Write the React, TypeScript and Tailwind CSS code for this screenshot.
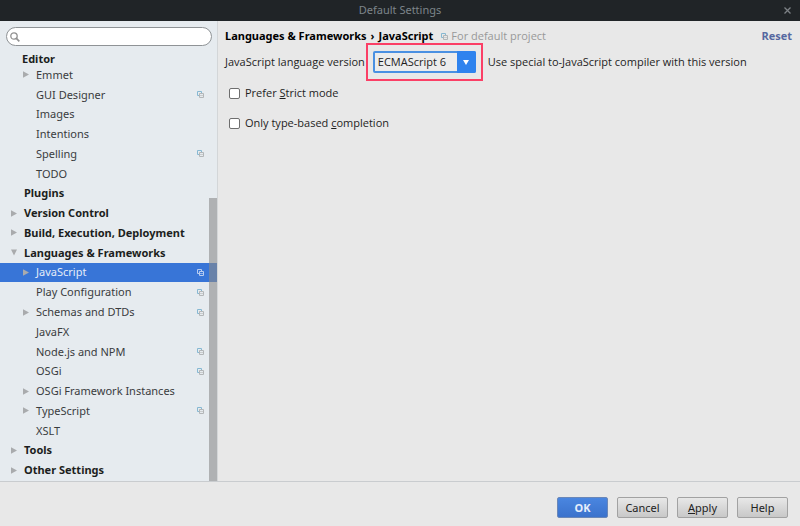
import type { ReactNode } from "react";

type TreeItem = {
  label: string;
  level: 1 | 2;
  arrow?: "open" | "closed";
  project?: boolean;
  selected?: boolean;
};

const items: TreeItem[] = [
  { label: "Emmet", level: 2, arrow: "closed" },
  { label: "GUI Designer", level: 2, project: true },
  { label: "Images", level: 2 },
  { label: "Intentions", level: 2 },
  { label: "Spelling", level: 2, project: true },
  { label: "TODO", level: 2 },
  { label: "Plugins", level: 1 },
  { label: "Version Control", level: 1, arrow: "closed" },
  { label: "Build, Execution, Deployment", level: 1, arrow: "closed" },
  { label: "Languages & Frameworks", level: 1, arrow: "open" },
  { label: "JavaScript", level: 2, arrow: "closed", project: true, selected: true },
  { label: "Play Configuration", level: 2, project: true },
  { label: "Schemas and DTDs", level: 2, arrow: "closed", project: true },
  { label: "JavaFX", level: 2 },
  { label: "Node.js and NPM", level: 2, project: true },
  { label: "OSGi", level: 2, project: true },
  { label: "OSGi Framework Instances", level: 2, arrow: "closed" },
  { label: "TypeScript", level: 2, arrow: "closed", project: true },
  { label: "XSLT", level: 2 },
  { label: "Tools", level: 1, arrow: "closed" },
  { label: "Other Settings", level: 1, arrow: "closed" },
];

function ProjectIcon({ selected }: { selected?: boolean }) {
  return (
    <svg width="7" height="7" viewBox="0 0 7 7" fill="none" className="shrink-0">
      <path d="M2 4.5H.5v-4h4V2" stroke={selected ? "#b9cdf0" : "#86b8d2"} />
      <path d="M2.5 2.5h4v4h-4z" stroke={selected ? "#b9cdf0" : "#b3b6b8"} />
      <path d="M3 4.5h3" stroke={selected ? "#8fb0ea" : "#c9cccd"} />
    </svg>
  );
}

function TreeArrow({ state }: { state?: "open" | "closed" }) {
  return (
    <svg width="6" height="7" viewBox="0 0 6 7" fill="#a9abad" className="shrink-0">
      {state === "closed" && <path d="M0 .2 6 3.5 0 6.8z" />}
      {state === "open" && <path d="M0 .5h6L3 6.5z" />}
    </svg>
  );
}

function TreeRow({ item }: { item: TreeItem }) {
  return (
    <li
      className={`flex items-center pr-[13px] ${item.level === 1 ? "pl-[11px] font-bold" : "pl-[23px]"} ${
        item.selected ? "bg-[#3875d7] text-[#e4ecf8]" : item.level === 1 ? "text-[#1c1e20]" : "text-[#3a3c3e]"
      }`}
    >
      <TreeArrow state={item.arrow} />
      <span className="ml-[7px] flex-1 whitespace-nowrap leading-4">{item.label}</span>
      {item.project && <ProjectIcon selected={item.selected} />}
    </li>
  );
}

function DialogButton({ children, primary }: { children: ReactNode; primary?: boolean }) {
  return (
    <button
      type="button"
      className={`h-[21px] w-[51px] rounded-[2px] border text-center leading-4 ${
        primary
          ? "border-[#6a87b8] bg-linear-to-b from-[#4a86e0] to-[#3b72cc] font-bold text-[#e6eefb]"
          : "border-[#a2a2a2] bg-linear-to-b from-[#e8e8e8] to-[#c8c8c8] text-[#222]"
      }`}
    >
      {children}
    </button>
  );
}

function CheckOption({ children }: { children: ReactNode }) {
  return (
    <label className="flex items-center gap-[5px]">
      <input
        type="checkbox"
        className="size-[11px] appearance-none rounded-[2px] border border-[#6e6e6e] bg-white checked:bg-[#3875d7]"
      />
      <span className="leading-4">{children}</span>
    </label>
  );
}

export default function App() {
  return (
    <div className="flex h-screen flex-col bg-[#e8e8e8] font-['Noto_Sans',sans-serif] text-[11px] text-[#1e1e1e]">
      <header className="relative flex h-[21px] shrink-0 items-center justify-center bg-[#202427] text-[#7d848a]">
        <h1>Default Settings</h1>
        <button type="button" aria-label="Close" className="absolute right-[9px]">
          <svg width="7" height="7" viewBox="0 0 7 7" stroke="#7d8286" strokeWidth="1.3">
            <path d="M.5.5l6 6M6.5.5l-6 6" />
          </svg>
        </button>
      </header>

      <div className="flex min-h-0 flex-1 border-b border-[#c9cccf]">
        <aside className="relative flex w-[218px] shrink-0 flex-col border-r border-[#d3d6d8] bg-[#e6ebef]">
          <div className="relative mx-[6px] mt-[6px] mr-[5px] flex items-center">
            <svg
              width="10"
              height="10"
              viewBox="0 0 10 10"
              fill="none"
              stroke="#929292"
              className="pointer-events-none absolute left-1"
            >
              <circle cx="4" cy="4" r="3.2" strokeWidth="1.3" />
              <path d="M6.4 6.4 9.3 9.3" strokeWidth="1.7" />
            </svg>
            <input
              type="search"
              aria-label="Search settings"
              className="h-[19px] w-full rounded-full border border-[#8f9396] bg-white pr-2 pl-5 outline-none"
            />
          </div>
          <h2 className="mt-[5px] pl-[22px] font-bold leading-4 text-[#1c1e20]">Editor</h2>
          <ul className="-mt-[2px] grid min-h-0 flex-1 auto-rows-fr pb-px">
            {items.map((item) => (
              <TreeRow key={item.label} item={item} />
            ))}
          </ul>
          <div className="absolute right-0 bottom-0 h-[283px] w-2 bg-[#8b8b8b]/60" />
        </aside>

        <main className="flex-1 pt-[7px] pr-2 pl-[7px] font-['Open_Sans',sans-serif]">
          <div className="flex items-center">
            <h2 className="flex gap-1 font-['Noto_Sans',sans-serif] font-bold leading-4 text-black">
              <span>Languages &amp; Frameworks</span>
              <span>›</span>
              <span>JavaScript</span>
            </h2>
            <span className="ml-2 flex items-center gap-[3px] leading-4 text-[#999]">
              <ProjectIcon />
              For default project
            </span>
            <a href="#reset" className="ml-auto font-bold leading-4 text-[#5668a0]">
              Reset
            </a>
          </div>

          <div className="mt-[7px] flex items-center">
            <label htmlFor="version" className="leading-4">
              JavaScript language version
            </label>
            <div className="relative ml-2 flex">
              <select
                id="version"
                defaultValue="6"
                className="h-[22px] w-[103px] appearance-none rounded-[2px] border-2 border-[#4a90e2] bg-[#ececec] pl-[3px] leading-4 outline-none"
              >
                <option value="6">ECMAScript 6</option>
              </select>
              <span className="pointer-events-none absolute inset-y-0 right-0 flex w-[19px] items-center justify-center rounded-r-[2px] bg-[#2f83ee]">
                <svg width="6" height="5" viewBox="0 0 6 5" fill="white">
                  <path d="M0 0h6L3 5z" />
                </svg>
              </span>
              <span className="pointer-events-none absolute -inset-x-[7px] -inset-y-[8px] border-2 border-[#fb3f66]" />
            </div>
            <span className="ml-3 leading-4">Use special to-JavaScript compiler with this version</span>
          </div>

          <div className="mt-3 flex flex-col gap-[14px] pl-1">
            <CheckOption>
              Prefer <u>S</u>trict mode
            </CheckOption>
            <CheckOption>
              Only type-based <u>c</u>ompletion
            </CheckOption>
          </div>
        </main>
      </div>

      <footer className="flex shrink-0 items-start justify-end gap-[9px] pt-[15px] pr-3 pb-2">
        <DialogButton primary>OK</DialogButton>
        <DialogButton>Cancel</DialogButton>
        <DialogButton>
          <u>A</u>pply
        </DialogButton>
        <DialogButton>Help</DialogButton>
      </footer>
    </div>
  );
}
